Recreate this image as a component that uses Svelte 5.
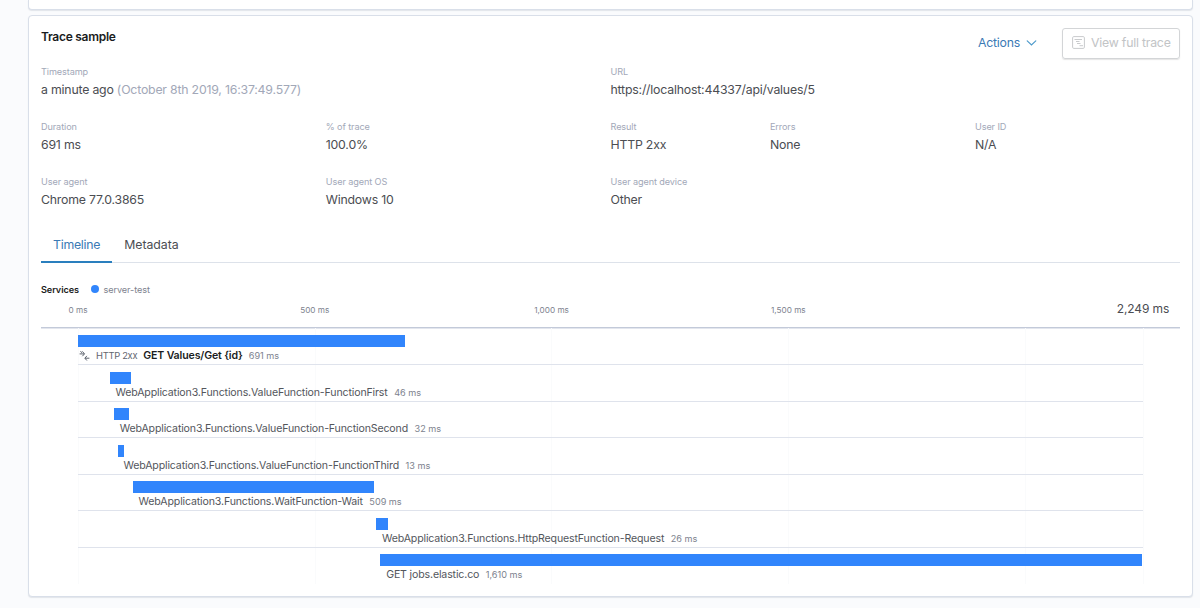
<script lang="ts">
  type Property = { label: string; value: string; muted?: string; width: string };
  type Span = { name: string; offset: number; duration: number; result?: string };

  const total = 2249;

  const properties: Property[] = [
    { label: 'Timestamp', value: 'a minute ago', muted: '(October 8th 2019, 16:37:49.577)', width: '50%' },
    { label: 'URL', value: 'https://localhost:44337/api/values/5', width: '50%' },
    { label: 'Duration', value: '691 ms', width: '25%' },
    { label: '% of trace', value: '100.0%', width: '25%' },
    { label: 'Result', value: 'HTTP 2xx', width: '14%' },
    { label: 'Errors', value: 'None', width: '18%' },
    { label: 'User ID', value: 'N/A', width: '18%' },
    { label: 'User agent', value: 'Chrome 77.0.3865', width: '25%' },
    { label: 'User agent OS', value: 'Windows 10', width: '25%' },
    { label: 'User agent device', value: 'Other', width: '50%' }
  ];

  const spans: Span[] = [
    { name: 'GET Values/Get {id}', offset: 0, duration: 691, result: 'HTTP 2xx' },
    { name: 'WebApplication3.Functions.ValueFunction-FunctionFirst', offset: 67, duration: 46 },
    { name: 'WebApplication3.Functions.ValueFunction-FunctionSecond', offset: 76, duration: 32 },
    { name: 'WebApplication3.Functions.ValueFunction-FunctionThird', offset: 84, duration: 13 },
    { name: 'WebApplication3.Functions.WaitFunction-Wait', offset: 116, duration: 509 },
    { name: 'WebApplication3.Functions.HttpRequestFunction-Request', offset: 630, duration: 26 },
    { name: 'GET jobs.elastic.co', offset: 639, duration: 1610 }
  ];

  const ticks = [0, 500, 1000, 1500];
  const gridlines = [0, 500, 1000, 1500, 2000, total];

  let activeTab = $state('Timeline');

  const percent = (ms: number) => `${(ms / total) * 100}%`;
  const format = (ms: number) => `${ms.toLocaleString('en-US')} ms`;
</script>

<div class="page">
  <div class="panel previous"></div>

  <div class="panel sample">
    <div class="header">
      <h5>Trace sample</h5>
      <div class="actions">
        <button class="link-button">
          Actions
          <svg width="11" height="11" viewBox="0 0 11 11" fill="none" stroke="#4d9acb" stroke-width="1.2" stroke-linecap="round">
            <path d="M1.2 3.9 5.5 7.9 9.8 3.9" />
          </svg>
        </button>
        <button class="trace-button" disabled>
          <svg width="13" height="13" viewBox="0 0 13 13" fill="none" stroke="#c9cbcd">
            <rect x="0.6" y="0.6" width="11.8" height="11.8" rx="1.2" />
            <path d="M2.5 3.5h7.5M4 5.5h3.5M5 7.5h3.5M7.5 9.7h3.5" />
          </svg>
          View full trace
        </button>
      </div>
    </div>

    <div class="properties">
      {#each properties as property}
        <div class="property" style="width: {property.width}">
          <div class="label">{property.label}</div>
          <div class="value">
            {property.value}
            {#if property.muted}<span class="muted">{property.muted}</span>{/if}
          </div>
        </div>
      {/each}
    </div>

    <div class="tabs">
      {#each ['Timeline', 'Metadata'] as tab}
        <button class="tab" class:active={activeTab === tab} onclick={() => (activeTab = tab)}>{tab}</button>
      {/each}
    </div>

    <div class="legend">
      <strong>Services</strong>
      <span class="dot"></span>
      <span>server-test</span>
    </div>

    <div class="axis">
      <div class="scale">
        {#each ticks as tick}
          <span class="tick" style="left: {percent(tick)}">{format(tick)}</span>
        {/each}
        <span class="tick last" style="left: 100%">{format(total)}</span>
      </div>
    </div>

    <div class="waterfall">
      {#each gridlines as line}
        <span class="gridline" style="left: {percent(line)}"></span>
      {/each}
      {#each spans as span}
        <div class="row">
          <div class="bar" style="margin-left: {percent(span.offset)}; width: {percent(span.duration)}"></div>
          <div class="row-text" class:root={span.result} style="margin-left: {percent(span.offset)}">
            {#if span.result}
              <svg width="11" height="11" viewBox="0 0 11 11" fill="none" stroke="#5a606b" stroke-width="1">
                <path d="M0.6 3.9h4.6M3.4 1.4l2.1 2.5-2.1 2.3M10.4 8.2H6M7.9 5.9 5.8 8.2l2.1 2.3M1.4 1.4l1.6 1.3" />
              </svg>
              <span class="result">{span.result}</span>
            {/if}
            <span class="name">{span.name}</span>
            <span class="duration">{format(span.duration)}</span>
          </div>
        </div>
      {/each}
    </div>
  </div>
</div>

<style>
  :global(body) {
    margin: 0;
    background: #fafbfd;
  }

  .page {
    box-sizing: border-box;
    width: 1200px;
    height: 608px;
    padding: 0 7px 0 28px;
    overflow: hidden;
    font-family: Inter, sans-serif;
    color: #343741;
  }

  .panel {
    box-sizing: border-box;
    background: #fff;
    border: 1px solid #d9dfe9;
    border-radius: 4px;
    box-shadow: 0 1px 1px rgba(152, 162, 179, 0.25);
  }

  .previous {
    height: 10px;
    border-top: none;
    border-radius: 0 0 4px 4px;
  }

  .sample {
    height: 582px;
    margin-top: 5px;
    padding: 12px 12px 0;
  }

  .header {
    display: flex;
    justify-content: space-between;
    height: 37px;
  }

  h5 {
    margin: 0;
    font-size: 12px;
    font-weight: 600;
    line-height: 18px;
    letter-spacing: -0.27px;
    color: #1a1c21;
  }

  .actions {
    display: flex;
    align-items: center;
    gap: 25px;
    height: 30px;
  }

  button {
    display: flex;
    align-items: center;
    padding: 0;
    border: none;
    background: none;
    font: inherit;
    font-size: 12.3px;
    letter-spacing: -0.22px;
    cursor: pointer;
  }

  .link-button {
    gap: 6px;
    padding-bottom: 2px;
    color: #3b7ab5;
  }

  .trace-button {
    box-sizing: border-box;
    gap: 6px;
    width: 118px;
    height: 31px;
    padding: 0 0 1px 9px;
    border: 1px solid #d3d5d7;
    border-radius: 3px;
    box-shadow: 0 1px 1px rgba(150, 150, 150, 0.25);
    color: #c2c4c6;
    white-space: nowrap;
    cursor: default;
  }

  .properties {
    display: flex;
    flex-wrap: wrap;
  }

  .property {
    height: 55.2px;
  }

  .label {
    font-size: 9.15px;
    line-height: 14px;
    letter-spacing: -0.1px;
    color: #a2a8b8;
  }

  .value {
    padding-top: 1px;
    font-size: 12.3px;
    line-height: 20px;
    letter-spacing: -0.2px;
    color: #4b4d52;
  }

  .muted {
    color: #a2a8b8;
  }

  .tabs {
    display: flex;
    height: 35.4px;
    margin-top: -4px;
    border-bottom: 1px solid #dde2ea;
  }

  .tab {
    height: 36.4px;
    box-sizing: border-box;
    padding: 1px 12px 0;
    border-bottom: 2px solid transparent;
    letter-spacing: -0.05px;
    color: #4b4d52;
  }

  .tab.active {
    border-bottom-color: #2a7fbe;
    letter-spacing: -0.25px;
    color: #3b7ab5;
  }

  .legend {
    display: flex;
    align-items: center;
    height: 14px;
    margin-top: 19.5px;
    font-size: 9.15px;
    letter-spacing: -0.08px;
    color: #7d828e;
  }

  .legend strong {
    font-weight: 600;
    color: #1a1c21;
  }

  .dot {
    width: 8px;
    height: 8px;
    margin: 0 4.5px 0 12px;
    border-radius: 50%;
    background: #3185fc;
  }

  .axis {
    height: 31px;
    padding: 0 37px;
    border-bottom: 1px solid #c3cad9;
    box-shadow: 0 1px 0 #e3e6ee;
  }

  .scale {
    position: relative;
    height: 31px;
  }

  .tick {
    position: absolute;
    top: 7px;
    font-size: 8.2px;
    line-height: 14px;
    color: #7d828e;
    white-space: nowrap;
    transform: translateX(-50%);
  }

  .tick.last {
    top: 5px;
    font-size: 12px;
    line-height: 16px;
    letter-spacing: -0.1px;
    color: #4b4d52;
  }

  .waterfall {
    position: relative;
    height: 256px;
    margin: 0 37.5px 0 37px;
  }

  .gridline {
    position: absolute;
    top: 0;
    bottom: 0;
    width: 1px;
    background: #fafbfc;
  }

  .row {
    position: relative;
    box-sizing: border-box;
    height: 36.57px;
    padding-top: 6.5px;
    border-bottom: 1px solid #dfe3ec;
  }

  .row:last-child {
    border-bottom: none;
  }

  .bar {
    height: 12px;
    background: #3185fc;
  }

  .row-text {
    display: flex;
    align-items: center;
    gap: 6.5px;
    height: 17px;
    padding-left: 5.7px;
    white-space: nowrap;
  }

  .row-text.root {
    gap: 6px;
    padding-left: 1px;
  }

  .name {
    font-size: 10.6px;
    letter-spacing: -0.15px;
    color: #53565c;
  }

  .root .name {
    font-weight: 600;
    color: #1a1c21;
  }

  .result {
    font-size: 9.4px;
    letter-spacing: -0.3px;
    color: #62666f;
  }

  .duration {
    font-size: 9.15px;
    color: #7d828e;
  }
</style>
